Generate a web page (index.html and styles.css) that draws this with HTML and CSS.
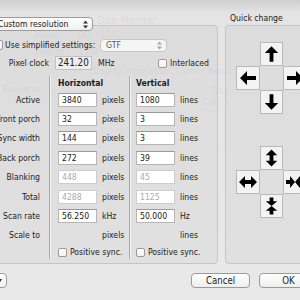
FILE: index.html
```html
<!DOCTYPE html>
<html lang="en">
<head>
    <meta charset="UTF-8">
    <meta name="viewport" content="width=device-width, initial-scale=1.0">
    <title>Custom resolution</title>
    <link rel="stylesheet" href="styles.css">
</head>
<body>
    <!-- Window behind the sheet, showing through -->
    <div class="ghost">
        <span class="g g-title">Dual Monitor</span>
        <span class="g g-vendor">Vendor :</span>
        <span class="g g-del">DEL</span>
        <span class="g g-code">104C</span>
        <span class="g g-product">Product :</span>
        <span class="g g-pcode">1176</span>
        <span class="g g-info">Display information</span>
        <span class="g g-current">Current Resolution</span>
        <span class="g g-res">Resolution</span>
        <span class="g g-type">Type</span>
        <span class="g g-colors">Colors</span>
    </div>

    <div class="dialog">
        <div class="main">
            <!-- Timing settings -->
            <div class="left-col">
                <div class="panel">
                    <div class="popup mode">
                        <span>Custom resolution</span>
                        <svg class="updown" width="5" height="9" viewBox="0 0 5 9"><path d="M0 3.5 2.5 0.5 5 3.5ZM0 5.5 2.5 8.5 5 5.5Z"/></svg>
                    </div>

                    <div class="row simple">
                        <span class="checkbox cut"></span>
                        <span class="simple-label">Use simplified settings:</span>
                        <div class="popup gtf">
                            <span>GTF</span>
                            <svg class="updown" width="5" height="9" viewBox="0 0 5 9"><path d="M0 3.5 2.5 0.5 5 3.5ZM0 5.5 2.5 8.5 5 5.5Z"/></svg>
                        </div>
                    </div>

                    <div class="row clock">
                        <span class="clock-label">Pixel clock</span>
                        <span class="clock-field">241.20</span>
                        <span class="clock-unit">MHz</span>
                        <span class="checkbox"></span>
                        <span class="check-text">Interlaced</span>
                    </div>

                    <div class="table">
                        <div class="labels">
                            <div class="head"></div>
                            <div class="cell">Active</div>
                            <div class="cell">Front porch</div>
                            <div class="cell">Sync width</div>
                            <div class="cell">Back porch</div>
                            <div class="cell">Blanking</div>
                            <div class="cell">Total</div>
                            <div class="cell">Scan rate</div>
                            <div class="cell">Scale to</div>
                            <div class="cell last"></div>
                        </div>
                        <div class="col horiz">
                            <div class="head">Horizontal</div>
                            <div class="cell"><span class="field">3840</span><span class="unit">pixels</span></div>
                            <div class="cell"><span class="field">32</span><span class="unit">pixels</span></div>
                            <div class="cell"><span class="field">144</span><span class="unit">pixels</span></div>
                            <div class="cell"><span class="field">272</span><span class="unit">pixels</span></div>
                            <div class="cell"><span class="field off">448</span><span class="unit">pixels</span></div>
                            <div class="cell"><span class="field off">4288</span><span class="unit">pixels</span></div>
                            <div class="cell"><span class="field">56.250</span><span class="unit">kHz</span></div>
                            <div class="cell"><span class="spacer"></span><span class="unit">pixels</span></div>
                            <div class="cell last"><span class="checkbox"></span><span class="check-text">Positive sync.</span></div>
                        </div>
                        <div class="col vert">
                            <div class="head">Vertical</div>
                            <div class="cell"><span class="field">1080</span><span class="unit">lines</span></div>
                            <div class="cell"><span class="field">3</span><span class="unit">lines</span></div>
                            <div class="cell"><span class="field">3</span><span class="unit">lines</span></div>
                            <div class="cell"><span class="field">39</span><span class="unit">lines</span></div>
                            <div class="cell"><span class="field off">45</span><span class="unit">lines</span></div>
                            <div class="cell"><span class="field off">1125</span><span class="unit">lines</span></div>
                            <div class="cell"><span class="field">50.000</span><span class="unit">Hz</span></div>
                            <div class="cell"><span class="spacer"></span><span class="unit">lines</span></div>
                            <div class="cell last"><span class="checkbox"></span><span class="check-text">Positive sync.</span></div>
                        </div>
                    </div>
                </div>
            </div>

            <!-- Quick change arrows -->
            <div class="right-col">
                <div class="group-title">Quick change</div>
                <div class="panel">
                    <div class="pad move">
                        <div class="key up">
                            <svg viewBox="0 0 22 22"><polygon points="11,3 18,10 13,10 13,19 9,19 9,10 4,10"/></svg>
                        </div>
                        <div class="key left">
                            <svg viewBox="0 0 22 22"><polygon transform="rotate(-90 11 11)" points="11,3 18,10 13,10 13,19 9,19 9,10 4,10"/></svg>
                        </div>
                        <div class="key right">
                            <svg viewBox="0 0 22 22"><polygon transform="rotate(90 11 11)" points="11,3 18,10 13,10 13,19 9,19 9,10 4,10"/></svg>
                        </div>
                        <div class="key down">
                            <svg viewBox="0 0 22 22"><polygon transform="rotate(180 11 11)" points="11,3 18,10 13,10 13,19 9,19 9,10 4,10"/></svg>
                        </div>
                    </div>

                    <div class="pad size">
                        <div class="key up">
                            <svg viewBox="0 0 22 22"><polygon points="11,2 17,8 13,8 13,14 17,14 11,20 5,14 9,14 9,8 5,8"/></svg>
                        </div>
                        <div class="key left">
                            <svg viewBox="0 0 22 22"><polygon transform="rotate(90 11 11)" points="11,2 17,8 13,8 13,14 17,14 11,20 5,14 9,14 9,8 5,8"/></svg>
                        </div>
                        <div class="key right">
                            <svg viewBox="0 0 22 22"><g transform="rotate(90 11 11)"><polygon points="9,2 13,2 13,6 17,6 11,11 5,6 9,6"/><polygon points="11,11 17,16 13,16 13,20 9,20 9,16 5,16"/></g></svg>
                        </div>
                        <div class="key down">
                            <svg viewBox="0 0 22 22"><polygon points="9,2 13,2 13,6 17,6 11,11 5,6 9,6"/><polygon points="11,11 17,16 13,16 13,20 9,20 9,16 5,16"/></svg>
                        </div>
                    </div>
                </div>
            </div>
        </div>

        <div class="buttons">
            <div class="popup stub">
                <svg class="caret" width="5" height="4" viewBox="0 0 5 4"><path d="M0 0 5 0 2.5 4Z"/></svg>
            </div>
            <div class="button cancel">Cancel</div>
            <div class="button ok">OK</div>
        </div>
    </div>
</body>
</html>
```

FILE: styles.css
```css
* {
    margin: 0;
    padding: 0;
    box-sizing: border-box;
}

html,
body {
    width: 300px;
    height: 300px;
    overflow: hidden;
}

body {
    position: relative;
    z-index: 0;
    background: linear-gradient(#cfcfcf 0, #e4e4e4 13px, #e9e9e9 100%);
    font-family: "DejaVu Sans Condensed", "Liberation Sans", sans-serif;
    font-size: 8.6px;
    color: #1c1c1c;
}

/* faint window behind */
.ghost {
    position: absolute;
    inset: 0;
    z-index: -1;
}

.g {
    position: absolute;
    color: rgba(0, 0, 0, 0.07);
    white-space: nowrap;
}

.g-title { left: 98px; top: 15px; font-size: 10px; }
.g-vendor { left: 35px; top: 30px; }
.g-del { left: 78px; top: 30px; }
.g-code { left: 100px; top: 30px; }
.g-product { left: 35px; top: 47px; }
.g-pcode { left: 79px; top: 47px; }
.g-info { left: 93px; top: 66px; }
.g-current { left: 176px; top: 66px; }
.g-res { left: 3px; top: 84px; }
.g-type { left: 211px; top: 85px; }
.g-colors { left: 204px; top: 97px; }

.dialog {
    width: 330px;
    margin-left: -5px;
    padding-top: 12px;
}

.main {
    display: flex;
    gap: 7px;
}

.left-col {
    width: 223px;
    padding-top: 13px;
}

.right-col {
    flex: 1;
}

.group-title {
    height: 13px;
    line-height: 13px;
    padding-left: 5px;
}

.panel {
    height: 239px;
    border: 1px solid #c5c5c5;
    border-radius: 4px;
    background: rgba(0, 0, 0, 0.03);
}

/* popup buttons */
.popup {
    display: flex;
    align-items: center;
    justify-content: space-between;
    height: 14px;
    border: 1px solid #9c9c9c;
    border-radius: 4px;
    background: linear-gradient(#ffffff, #f0f0f0);
    line-height: 12px;
    white-space: nowrap;
}

.popup .updown {
    flex: none;
    fill: #333;
}

.mode {
    width: 105px;
    margin: -9px 0 0 -8px;
    padding: 0 4px 0 9px;
}

.gtf {
    width: 67px;
    height: 13px;
    padding: 0 4px 0 5px;
    border-color: #c6c6c6;
    background: #f5f5f5;
    color: #5a5a5a;
}

.gtf .updown {
    fill: #a5a5a5;
}

.row {
    display: flex;
    align-items: center;
    height: 14px;
}

.simple {
    margin-top: 7px;
}

.checkbox {
    flex: none;
    width: 9px;
    height: 9px;
    border: 1px solid #9a9a9a;
    border-radius: 2px;
    background: linear-gradient(#ffffff, #f1f1f1);
}

.checkbox.cut {
    width: 10px;
    height: 10px;
    margin-left: -3px;
}

.simple-label {
    width: 95px;
    margin-left: 2px;
    white-space: nowrap;
}

.clock {
    margin-top: 4px;
}

.clock-label {
    width: 53px;
    text-align: right;
    white-space: nowrap;
}

.clock-field {
    width: 37px;
    height: 14px;
    margin-left: 6px;
    padding-left: 2px;
    border: 1px solid #c2c2c2;
    background: #eeeeee;
    font-size: 9.8px;
    line-height: 12px;
    color: #222;
}

.clock-unit {
    width: 60px;
    margin-left: 6px;
}

.check-text {
    margin-left: 3px;
    white-space: nowrap;
}

/* timing table */
.table {
    display: flex;
    margin-top: 6px;
}

.labels {
    width: 53px;
    padding-right: 9px;
    text-align: right;
}

.col {
    border-left: 1px solid #aaaaaa;
    box-shadow: inset 1px 0 #f3f3f3;
}

.horiz {
    width: 80px;
    padding-left: 8px;
}

.vert {
    flex: 1;
    padding-left: 6px;
}

.head {
    height: 14px;
    line-height: 14px;
    font-weight: bold;
}

.cell {
    display: flex;
    align-items: center;
    height: 19.4px;
    white-space: nowrap;
}

.labels .cell {
    justify-content: flex-end;
}

.cell.last {
    height: 14px;
}

.field {
    width: 39px;
    height: 14px;
    padding-left: 3px;
    border: 1px solid #b6b6b6;
    border-top-color: #999;
    background: #fff;
    line-height: 12px;
    color: #1a1a1a;
}

.field.off {
    border-color: #cdcdcd;
    color: #ababab;
}

.spacer {
    width: 39px;
}

.unit {
    margin-left: 5px;
}

/* quick change pads */
.pad {
    display: grid;
    grid-template-columns: 24px 23px 24px;
    grid-template-rows: 24px 24px 24px;
    margin-left: 10px;
}

.move {
    margin-top: 16px;
}

.size {
    margin-top: 32px;
}

.key {
    border: 1px solid #b9b9b9;
    background: #f3f3f3;
}

.key svg {
    display: block;
    width: 100%;
    height: 100%;
    fill: #000;
}

.key.up { grid-area: 1 / 2; }
.key.left { grid-area: 2 / 1; }
.key.right { grid-area: 2 / 3; }
.key.down { grid-area: 3 / 2; }

/* bottom buttons */
.buttons {
    display: flex;
    margin-top: 9px;
}

.stub {
    width: 22px;
    height: 15px;
    margin-left: -10px;
    padding-right: 4px;
    justify-content: flex-end;
}

.caret {
    fill: #333;
}

.button {
    width: 59px;
    height: 15px;
    border: 1px solid #9a9a9a;
    border-radius: 4px;
    background: linear-gradient(#ffffff, #eeeeee);
    font-size: 9.6px;
    line-height: 13px;
    text-align: center;
}

.cancel {
    margin-left: 184px;
}

.ok {
    margin-left: 9px;
}
```
